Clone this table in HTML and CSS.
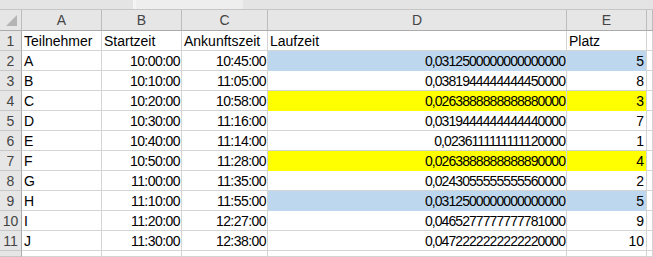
FILE: index.html
```html
<!DOCTYPE html>
<html lang="de">
<head>
<meta charset="utf-8">
<title>Laufzeit</title>
<link rel="stylesheet" href="styles.css">
</head>
<body>
<div class="topbar">
  <div class="tb-name"></div>
  <div class="tb-gap"></div>
  <div class="tb-mid"></div>
  <div class="tb-formula"></div>
</div>
<div class="sheet">
  <div class="hd corner"><svg class="tri" width="21" height="20" viewBox="0 0 21 20"><polygon points="17,5 17,16 6,16" fill="#b4b4b4"/></svg></div>
  <div class="hd col">A</div>
  <div class="hd col">B</div>
  <div class="hd col">C</div>
  <div class="hd col">D</div>
  <div class="hd col">E</div>
  <div class="hd col"></div>

  <div class="rh">1</div>
  <div class="c">Teilnehmer</div>
  <div class="c">Startzeit</div>
  <div class="c">Ankunftszeit</div>
  <div class="c">Laufzeit</div>
  <div class="c">Platz</div>
  <div class="c"></div>

  <div class="rh">2</div>
  <div class="c">A</div>
  <div class="c r t">10:00:00</div>
  <div class="c r t">10:45:00</div>
  <div class="c r n blue">0,0312500000000000000</div>
  <div class="c r blue">5</div>
  <div class="c"></div>

  <div class="rh">3</div>
  <div class="c">B</div>
  <div class="c r t">10:10:00</div>
  <div class="c r t">11:05:00</div>
  <div class="c r n">0,0381944444444450000</div>
  <div class="c r">8</div>
  <div class="c"></div>

  <div class="rh">4</div>
  <div class="c">C</div>
  <div class="c r t">10:20:00</div>
  <div class="c r t">10:58:00</div>
  <div class="c r n yellow">0,0263888888888880000</div>
  <div class="c r yellow">3</div>
  <div class="c"></div>

  <div class="rh">5</div>
  <div class="c">D</div>
  <div class="c r t">10:30:00</div>
  <div class="c r t">11:16:00</div>
  <div class="c r n">0,0319444444444440000</div>
  <div class="c r">7</div>
  <div class="c"></div>

  <div class="rh">6</div>
  <div class="c">E</div>
  <div class="c r t">10:40:00</div>
  <div class="c r t">11:14:00</div>
  <div class="c r n">0,0236111111111120000</div>
  <div class="c r">1</div>
  <div class="c"></div>

  <div class="rh">7</div>
  <div class="c">F</div>
  <div class="c r t">10:50:00</div>
  <div class="c r t">11:28:00</div>
  <div class="c r n yellow">0,0263888888888890000</div>
  <div class="c r yellow">4</div>
  <div class="c"></div>

  <div class="rh">8</div>
  <div class="c">G</div>
  <div class="c r t">11:00:00</div>
  <div class="c r t">11:35:00</div>
  <div class="c r n">0,0243055555555560000</div>
  <div class="c r">2</div>
  <div class="c"></div>

  <div class="rh">9</div>
  <div class="c">H</div>
  <div class="c r t">11:10:00</div>
  <div class="c r t">11:55:00</div>
  <div class="c r n blue">0,0312500000000000000</div>
  <div class="c r blue">5</div>
  <div class="c"></div>

  <div class="rh">10</div>
  <div class="c">I</div>
  <div class="c r t">11:20:00</div>
  <div class="c r t">12:27:00</div>
  <div class="c r n">0,0465277777777781000</div>
  <div class="c r">9</div>
  <div class="c"></div>

  <div class="rh">11</div>
  <div class="c">J</div>
  <div class="c r t">11:30:00</div>
  <div class="c r t">12:38:00</div>
  <div class="c r n">0,0472222222222220000</div>
  <div class="c r">10</div>
  <div class="c"></div>

  <div class="rh"></div>
  <div class="c"></div>
  <div class="c"></div>
  <div class="c"></div>
  <div class="c"></div>
  <div class="c"></div>
  <div class="c"></div>
</div>
</body>
</html>
```

FILE: styles.css
```css
html, body {
  margin: 0;
  padding: 0;
  background: #ffffff;
  overflow: hidden;
}

body {
  width: 653px;
  height: 257px;
  font-family: "Liberation Sans", Arial, sans-serif;
  font-size: 14px;
  color: #000000;
}

.topbar {
  display: flex;
  height: 10px;
  box-sizing: border-box;
  border-bottom: 1px solid #c6c6c6;
  background: #e6e6e6;
}

.tb-name {
  width: 133px;
  background: #e4e4e4;
}

.tb-gap {
  width: 3px;
  background: #f4f4f4;
}

.tb-mid {
  width: 107px;
  background: #eeeeee;
}

.tb-formula {
  flex: 1;
  background: #e4e4e4;
}

.sheet {
  display: grid;
  grid-template-columns: 22px 80px 80px 86px 299px 80px 6px;
  grid-template-rows: 21px repeat(11, 20px) 6px;
  overflow: hidden;
}

.sheet > div {
  box-sizing: border-box;
  border-right: 1px solid #d4d4d4;
  border-bottom: 1px solid #d4d4d4;
  white-space: nowrap;
  overflow: hidden;
  line-height: 15px;
  padding-top: 3px;
}

.hd {
  background: #e6e6e6;
  color: #444444;
  text-align: center;
  border-right-color: #bcbcbc !important;
  border-bottom-color: #ababab !important;
}

.corner {
  padding: 0 !important;
  position: relative;
}

.tri {
  display: block;
}

.rh {
  background: #e6e6e6;
  color: #444444;
  text-align: center;
  border-right-color: #ababab !important;
  border-bottom-color: #c8c8c8 !important;
}

.c {
  padding-left: 2px;
  padding-right: 2px;
}

.r {
  text-align: right;
}

.t {
  letter-spacing: -0.55px;
  padding-right: 1px !important;
}

.n {
  letter-spacing: -0.93px;
  padding-right: 1px !important;
}

.blue {
  background: #bdd7ee;
  border-bottom-color: #bdd7ee !important;
}

.yellow {
  background: #ffff00;
  border-bottom-color: #ffff00 !important;
}
```
